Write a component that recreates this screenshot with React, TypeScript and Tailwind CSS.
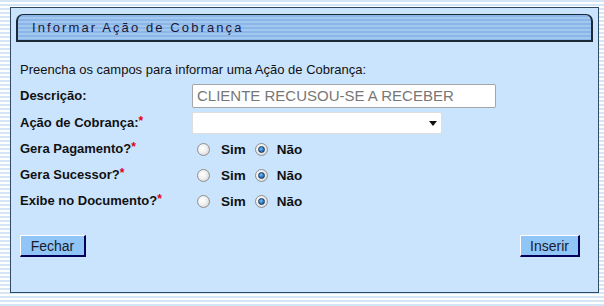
const font = { fontFamily: '"Liberation Sans", Arial, sans-serif' };

function Radio({ checked }: { checked?: boolean }) {
  return (
    <span className="flex h-[13px] w-[13px] items-center justify-center rounded-full border border-[#8f8f8f] bg-[radial-gradient(circle_at_40%_40%,#ffffff_0%,#f0f0f0_45%,#c8c8c8_100%)]">
      {checked && (
        <span className="h-[7px] w-[7px] rounded-full border border-[#123a66] bg-[radial-gradient(circle_at_40%_35%,#7ec0f0_0%,#2a7ac4_55%,#164f8a_100%)]" />
      )}
    </span>
  );
}

function YesNo() {
  return (
    <div className="flex items-center pl-[5px] text-[13.5px] font-bold text-[#111]">
      <Radio />
      <span className="ml-[11px] mt-[3px]">Sim</span>
      <span className="ml-[9px]">
        <Radio checked />
      </span>
      <span className="ml-[9px] mt-[3px]">Não</span>
    </div>
  );
}

function Label({ text, req }: { text: string; req?: boolean }) {
  return (
    <div className="w-[172px] shrink-0 text-[13px] font-bold text-[#111]">
      {text}
      {req && <span className="relative -top-[2px] text-[12px] text-[#e0001a]">*</span>}
    </div>
  );
}

export default function App() {
  return (
    <div
      style={font}
      className="h-[306px] w-[604px] overflow-hidden bg-[repeating-linear-gradient(to_bottom,#d4e5f5_0px,#d4e5f5_2px,#ffffff_2px,#ffffff_4px)] pl-[10px] pt-[7px]"
    >
      <div className="h-[286px] w-[589px] border border-[#2d4a66] bg-[#cbe4fd] pt-[6px]">
        <div className="ml-[5px] flex h-[28px] w-[577px] items-center rounded-tl-[7px] rounded-tr-[7px] border-x-2 border-b-2 border-t border-[#1c2a38] bg-[repeating-linear-gradient(to_bottom,#8ab6e8_0px,#8ab6e8_2px,#a3c7ef_2px,#a3c7ef_4px)] pl-[14px]">
          <span className="text-[13px] tracking-[2.1px] text-[#18183a]">Informar Ação de Cobrança</span>
        </div>

        <div className="pl-[9px] pr-[18px]">
          <div className="mt-[20px] text-[13px] leading-[16px] text-[#111]">
            Preencha os campos para informar uma Ação de Cobrança:
          </div>

          <div className="mt-[6px] flex h-[24px] items-center">
            <Label text="Descrição:" />
            <div className="flex h-[24px] w-[304px] items-center rounded-[2px] border border-[#a6a6a6] bg-white pl-[4px] text-[15px] text-[#777]">
              CLIENTE RECUSOU-SE A RECEBER
            </div>
          </div>

          <div className="mt-[4px] flex h-[22px] items-center">
            <Label text="Ação de Cobrança:" req />
            <div className="flex h-[22px] w-[250px] items-center justify-end rounded-[2px] border border-[#dedede] bg-white pr-[4px]">
              <svg width="8" height="5" viewBox="0 0 8 5">
                <path d="M0 0h8L4 5z" fill="#111" />
              </svg>
            </div>
          </div>

          <div className="mt-[2px] flex h-[26px] items-center">
            <Label text="Gera Pagamento?" req />
            <YesNo />
          </div>
          <div className="flex h-[26px] items-center">
            <Label text="Gera Sucessor?" req />
            <YesNo />
          </div>
          <div className="flex h-[26px] items-center">
            <Label text="Exibe no Documento?" req />
            <YesNo />
          </div>

          <div className="mt-[21px] flex justify-between">
            <button className="h-[22px] w-[66px] border-b-2 border-l border-r-2 border-t border-b-[#00005a] border-l-white border-r-[#00005a] border-t-white bg-[#8fc6f7] text-[14px] leading-none text-[#1a1a2a]">
              Fechar
            </button>
            <button className="h-[22px] w-[60px] border-b-2 border-l border-r-2 border-t border-b-[#00005a] border-l-white border-r-[#00005a] border-t-white bg-[#8fc6f7] text-[14px] leading-none text-[#1a1a2a]">
              Inserir
            </button>
          </div>
        </div>
      </div>
    </div>
  );
}
